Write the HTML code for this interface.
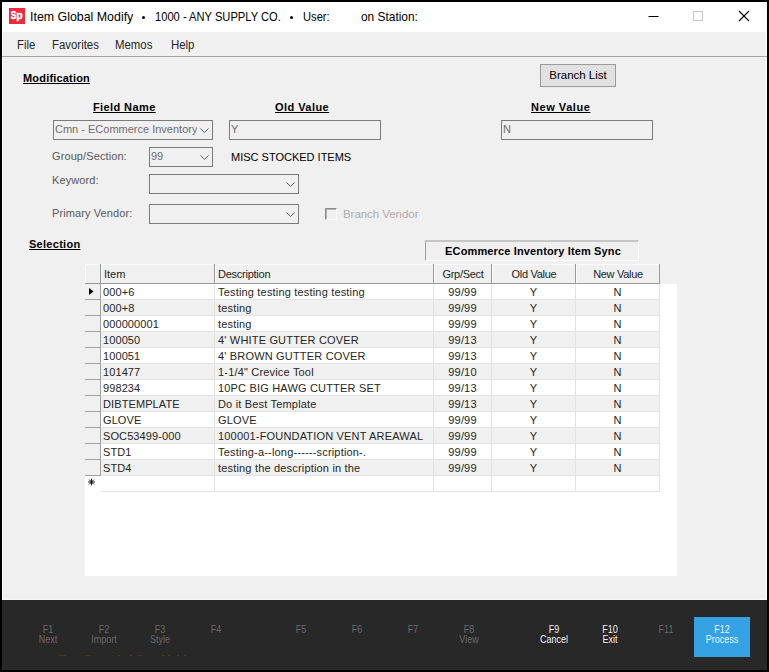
<!DOCTYPE html>
<html>
<head>
<meta charset="utf-8">
<title>Item Global Modify</title>
<style>
*{box-sizing:border-box;margin:0;padding:0}
html,body{width:769px;height:672px;overflow:hidden;background:#000}
body{font-family:"Liberation Sans",sans-serif;font-size:11px;color:#000;position:relative}
.abs{position:absolute;white-space:nowrap}
#win{position:absolute;left:2px;top:2px;width:765px;height:668px;background:#f0f0f0;overflow:hidden}
#title{position:absolute;left:0;top:0;width:765px;height:30px;background:#fff}
#title .t{position:absolute;top:8px;font-size:12.4px;line-height:14px;color:#000;white-space:nowrap;transform-origin:0 0}
#menu{position:absolute;left:0;top:30px;width:765px;height:25px;background:#f0f0f0}
#frame{position:absolute;left:0;top:30px;width:765px;height:568px;border:1px solid #fff;border-top:0;border-bottom-color:#f4f4f4}
#mline{position:absolute;left:0;top:54px;width:765px;height:1px;background:#a6a6a6}
#menu span{position:absolute;top:6px;font-size:12.4px;line-height:14px;color:#262626;white-space:nowrap;transform:scaleX(.92);transform-origin:0 0}
.h{font-weight:bold;text-decoration:underline;font-size:11px;line-height:13px}
.lbl{font-size:11px;line-height:13px;color:#585858;letter-spacing:.1px}
.box{position:absolute;border:1px solid #7a7a7a;background:#f0f0f0;font-size:11px;line-height:13px;color:#6d6d6d;padding:2px 0 0 1px;white-space:nowrap;overflow:hidden}
.chev{position:absolute}
#grid{position:absolute;left:83px;top:262px;width:592px;height:312px}
#grid .white{position:absolute;left:0;top:20px;width:592px;height:292px;background:#fff}
.hd{position:absolute;top:0;height:20px;background:#f0f0f0;box-shadow:inset -1px -1px 0 #999,inset 1px 1px 0 #fbfbfb;font-size:11px;line-height:13px;padding-top:4px;color:#1e1e1e;white-space:nowrap;overflow:hidden}
.row{position:absolute;left:0;width:575px;height:16px;font-size:11px;line-height:13px}
.row div{position:absolute;top:0;height:16px;border-right:1px solid #e3e3e3;border-bottom:1px solid #e3e3e3;padding-top:2px;white-space:nowrap;overflow:hidden;letter-spacing:.18px;color:#262626}
.row .rh{left:0;width:16px;background:#f0f0f0;border-right:1px solid #a0a0a0;border-bottom:1px solid #a0a0a0}
.row .c1{left:16px;width:114px;padding-left:2px;letter-spacing:.1px}
.row .c2{left:130px;width:219px;padding-left:3px}
.row .c3{left:349px;width:58px;text-align:center}
.row .c4{left:407px;width:84px;text-align:center}
.row .c5{left:491px;width:84px;text-align:center}
.row.alt div{background:#f0f0f0}
.row.alt .rh{background:#f0f0f0}
#foot{position:absolute;left:0;top:598px;width:765px;height:70px;background:#282828}
.fk{position:absolute;top:17px;width:56px;height:40px;text-align:center;font-size:10px;line-height:10px;color:#6a6a6a;padding-top:8px;white-space:nowrap}
.fk span{display:block;transform:scaleX(.9)}
.fk.on{color:#f1f1f1}
.fk.blue{background:#35a2e4;color:#e8f4fc}
</style>
</head>
<body>
<div id="win">
  <div id="title">
    <svg class="abs" style="left:7px;top:6px" width="16" height="16" viewBox="0 0 16 16"><rect width="16" height="16" fill="#ef2a3c"/><text transform="translate(1.8,11.1) scale(.76,1)" font-family="Liberation Sans" font-weight="bold" font-size="11" fill="#fff" stroke="#fff" stroke-width=".45">S</text><text x="7.2" y="11.1" font-family="Liberation Sans" font-weight="bold" font-size="10.5" fill="#fff" stroke="#fff" stroke-width=".35">p</text></svg>
    <span class="t" style="left:28px">Item Global Modify</span>
    <i class="abs" style="left:139.8px;top:13.8px;width:3.4px;height:3.4px;border-radius:50%;background:#000"></i>
    <span class="t" style="left:153px;transform:scaleX(.9)">1000 - ANY SUPPLY CO.</span>
    <i class="abs" style="left:287.7px;top:13.8px;width:3.4px;height:3.4px;border-radius:50%;background:#000"></i>
    <span class="t" style="left:301px;transform:scaleX(.9)">User:</span>
    <span class="t" style="left:359px;transform:scaleX(.96)">on Station:</span>
    <svg class="abs" style="left:644px;top:8px" width="110" height="12" viewBox="0 0 110 12">
      <path d="M2.5 6.5H12.5" stroke="#000" stroke-width="1" fill="none"/>
      <rect x="47.5" y="1.5" width="9" height="9" stroke="#c8c8c8" stroke-width="1" fill="none"/>
      <path d="M93 1L103 11M103 1L93 11" stroke="#000" stroke-width="1.1" fill="none"/>
    </svg>
  </div>
  <div id="menu">
    <span style="left:15px">File</span>
    <span style="left:50px">Favorites</span>
    <span style="left:113px">Memos</span>
    <span style="left:169px">Help</span>
  </div>

  <div id="frame"></div>
  <div id="mline"></div>
  <span class="abs h" style="left:21px;top:70px;letter-spacing:.18px">Modification</span>
  <span class="abs h" style="left:91px;top:99px;letter-spacing:.4px">Field Name</span>
  <span class="abs h" style="left:273px;top:99px;letter-spacing:.45px">Old Value</span>
  <span class="abs h" style="left:529px;top:99px;letter-spacing:.55px">New Value</span>

  <div class="abs" style="left:538px;top:62px;width:76px;height:23px;border:1px solid #9a9a9a;background:#e1e1e1;font-size:11.5px;line-height:13px;text-align:center;padding-top:4px;color:#000">Branch List</div>

  <div class="box" style="left:51px;top:118px;width:160px;height:20px"><div style="width:142px;overflow:hidden">Cmn - ECommerce Inventory</div></div>
  <div class="box" style="left:227px;top:118px;width:152px;height:20px">Y</div>
  <div class="box" style="left:499px;top:118px;width:152px;height:20px">N</div>

  <span class="abs lbl" style="left:50px;top:148px">Group/Section:</span>
  <div class="box" style="left:147px;top:145px;width:64px;height:20px">99</div>
  <span class="abs" style="left:229px;top:149px;font-size:11px;line-height:13px;color:#000">MISC STOCKED ITEMS</span>

  <span class="abs lbl" style="left:50px;top:172px">Keyword:</span>
  <div class="box" style="left:147px;top:172px;width:150px;height:20px"></div>

  <span class="abs lbl" style="left:50px;top:205px">Primary Vendor:</span>
  <div class="box" style="left:147px;top:202px;width:150px;height:20px"></div>

  <div class="abs" style="left:323px;top:206px;width:12px;height:12px;border:1px solid #8a8a8a;border-right-color:#fbfbfb;border-bottom-color:#fbfbfb;background:#f0f0f0;box-shadow:inset 1px 1px 0 #b4b4b4"></div>
  <span class="abs" style="left:341px;top:206px;font-size:11.5px;line-height:13px;color:#adadad;letter-spacing:-.05px">Branch Vendor</span>

  <svg class="abs" style="left:198px;top:125.7px" width="9" height="6" viewBox="0 0 9 6"><path d="M0.5 0.5L4.5 4.5L8.5 0.5" stroke="#5c5c5c" stroke-width="1" fill="none"/></svg>
  <svg class="abs" style="left:198px;top:152.7px" width="9" height="6" viewBox="0 0 9 6"><path d="M0.5 0.5L4.5 4.5L8.5 0.5" stroke="#5c5c5c" stroke-width="1" fill="none"/></svg>
  <svg class="abs" style="left:284px;top:180px" width="9" height="6" viewBox="0 0 9 6"><path d="M0.5 0.5L4.5 4.5L8.5 0.5" stroke="#5c5c5c" stroke-width="1" fill="none"/></svg>
  <svg class="abs" style="left:284px;top:209.7px" width="9" height="6" viewBox="0 0 9 6"><path d="M0.5 0.5L4.5 4.5L8.5 0.5" stroke="#5c5c5c" stroke-width="1" fill="none"/></svg>
  <span class="abs h" style="left:27px;top:236px;letter-spacing:.28px">Selection</span>

  <div class="abs" style="left:423px;top:238px;width:214px;height:21px;border:1px solid #a0a0a0;border-top:2px solid #c6c6c6;border-right-color:#fff;border-bottom-color:#fff;font-weight:bold;font-size:11px;line-height:13px;text-align:center;padding-top:3px;padding-left:2px;letter-spacing:.14px">ECommerce Inventory Item Sync</div>

  <div id="grid">
    <div class="white"></div>
    <div class="row" style="top:20px"><div class="rh"><svg width="5" height="7" viewBox="0 0 5 7" style="position:absolute;left:4px;top:4px"><path d="M0 0L4.5 3.5L0 7Z" fill="#000"/></svg></div><div class="c1">000+6</div><div class="c2">Testing testing testing testing</div><div class="c3">99/99</div><div class="c4">Y</div><div class="c5">N</div></div>
    <div class="row alt" style="top:36px"><div class="rh"></div><div class="c1">000+8</div><div class="c2">testing</div><div class="c3">99/99</div><div class="c4">Y</div><div class="c5">N</div></div>
    <div class="row" style="top:52px"><div class="rh"></div><div class="c1">000000001</div><div class="c2">testing</div><div class="c3">99/99</div><div class="c4">Y</div><div class="c5">N</div></div>
    <div class="row alt" style="top:68px"><div class="rh"></div><div class="c1">100050</div><div class="c2">4' WHITE GUTTER COVER</div><div class="c3">99/13</div><div class="c4">Y</div><div class="c5">N</div></div>
    <div class="row" style="top:84px"><div class="rh"></div><div class="c1">100051</div><div class="c2">4' BROWN GUTTER COVER</div><div class="c3">99/13</div><div class="c4">Y</div><div class="c5">N</div></div>
    <div class="row alt" style="top:100px"><div class="rh"></div><div class="c1">101477</div><div class="c2">1-1/4&quot; Crevice Tool</div><div class="c3">99/10</div><div class="c4">Y</div><div class="c5">N</div></div>
    <div class="row" style="top:116px"><div class="rh"></div><div class="c1">998234</div><div class="c2">10PC BIG HAWG CUTTER SET</div><div class="c3">99/13</div><div class="c4">Y</div><div class="c5">N</div></div>
    <div class="row alt" style="top:132px"><div class="rh"></div><div class="c1">DIBTEMPLATE</div><div class="c2">Do it Best Template</div><div class="c3">99/13</div><div class="c4">Y</div><div class="c5">N</div></div>
    <div class="row" style="top:148px"><div class="rh"></div><div class="c1">GLOVE</div><div class="c2">GLOVE</div><div class="c3">99/99</div><div class="c4">Y</div><div class="c5">N</div></div>
    <div class="row alt" style="top:164px"><div class="rh"></div><div class="c1">SOC53499-000</div><div class="c2">100001-FOUNDATION VENT AREAWAL</div><div class="c3">99/99</div><div class="c4">Y</div><div class="c5">N</div></div>
    <div class="row" style="top:180px"><div class="rh"></div><div class="c1">STD1</div><div class="c2">Testing-a--long------scription-.</div><div class="c3">99/99</div><div class="c4">Y</div><div class="c5">N</div></div>
    <div class="row alt" style="top:196px"><div class="rh"></div><div class="c1">STD4</div><div class="c2">testing the description in the</div><div class="c3">99/99</div><div class="c4">Y</div><div class="c5">N</div></div>
    <div class="row" style="top:212px"><div class="rh" style="background:#fff;border-color:#fff;padding:0"><svg width="16" height="16" viewBox="0 0 16 16" style="position:absolute;left:0;top:0"><path d="M6.5 2.6V9.4M3.1 6H9.9M4.1 3.6L8.9 8.4M8.9 3.6L4.1 8.4" stroke="#111" stroke-width="1" fill="none"/></svg></div><div class="c1"></div><div class="c2"></div><div class="c3"></div><div class="c4"></div><div class="c5"></div></div>
    <div class="hd" style="left:0;width:16px"></div>
    <div class="hd" style="left:16px;width:114px;padding-left:3px">Item</div>
    <div class="hd" style="left:130px;width:219px;padding-left:3px;letter-spacing:-.25px">Description</div>
    <div class="hd" style="left:349px;width:58px;text-align:center;letter-spacing:-.3px">Grp/Sect</div>
    <div class="hd" style="left:407px;width:84px;text-align:center;letter-spacing:-.3px">Old Value</div>
    <div class="hd" style="left:491px;width:84px;text-align:center;letter-spacing:-.3px">New Value</div>
  </div>

  <div id="foot">
    <i style="position:absolute;top:55px;left:56.8px;width:7.3px;height:1px;background:#4a3822"></i><i style="position:absolute;top:55px;left:82.8px;width:6.2px;height:1px;background:#4a3822"></i><i style="position:absolute;top:55px;left:109.9px;width:1.2px;height:1px;background:#4a3822"></i><i style="position:absolute;top:55px;left:116.1px;width:2.1px;height:1px;background:#4a3822"></i><i style="position:absolute;top:55px;left:127.6px;width:2.1px;height:1px;background:#4a3822"></i><i style="position:absolute;top:55px;left:135.9px;width:4.2px;height:1px;background:#4a3822"></i><i style="position:absolute;top:55px;left:159.9px;width:3.1px;height:1px;background:#4a3822"></i><i style="position:absolute;top:55px;left:166.1px;width:2.1px;height:1px;background:#4a3822"></i><i style="position:absolute;top:55px;left:174.5px;width:2.1px;height:1px;background:#4a3822"></i><i style="position:absolute;top:55px;left:181.8px;width:2.1px;height:1px;background:#4a3822"></i>
    <div class="fk" style="left:18px"><span>F1<br>Next</span></div>
    <div class="fk" style="left:74px"><span>F2<br>Import</span></div>
    <div class="fk" style="left:130px"><span>F3<br>Style</span></div>
    <div class="fk" style="left:186px"><span>F4</span></div>
    <div class="fk" style="left:271px"><span>F5</span></div>
    <div class="fk" style="left:327px"><span>F6</span></div>
    <div class="fk" style="left:383px"><span>F7</span></div>
    <div class="fk" style="left:439px"><span>F8<br>View</span></div>
    <div class="fk on" style="left:524px"><span>F9<br>Cancel</span></div>
    <div class="fk on" style="left:580px"><span>F10<br>Exit</span></div>
    <div class="fk" style="left:636px"><span>F11</span></div>
    <div class="fk blue" style="left:692px"><span>F12<br>Process</span></div>
  </div>
</div>
</body>
</html>
